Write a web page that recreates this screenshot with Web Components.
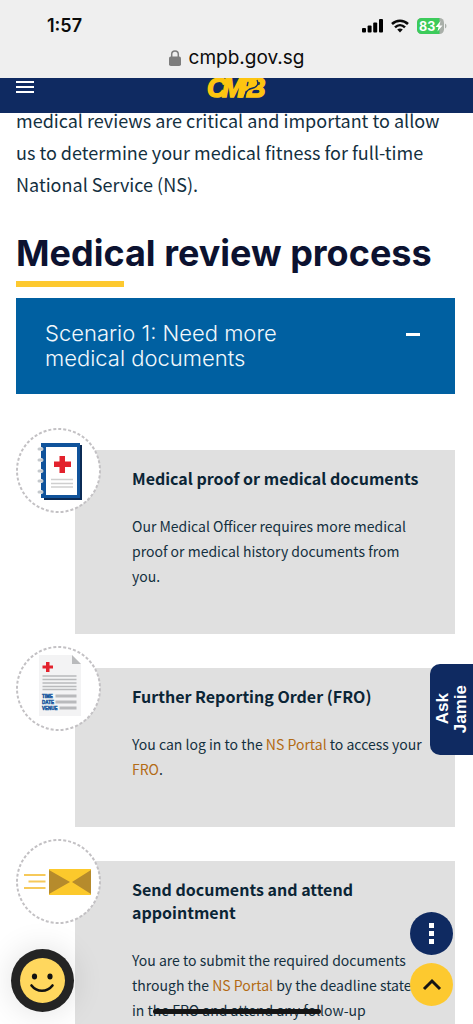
<!DOCTYPE html>
<html lang="en">
<head>
<meta charset="utf-8">
<meta name="viewport" content="width=device-width, initial-scale=1">
<title>Medical review process</title>
<style>
  :root {
    --navy: #0f2a61;
    --blue: #0060a1;
    --gold: #fdc92f;
    --ink: #14303f;
    --sans: "Noto Sans CJK SC", "Noto Sans", sans-serif;
    --display: Inter, "Open Sans", sans-serif;
  }
  html, body { margin: 0; height: 100%; }
  body { background: #fff; color: var(--ink); font-family: var(--sans); overflow: hidden; }
</style>
</head>
<body>
<cmpb-page></cmpb-page>

<script>
const define = (name, html) => {
  const template = document.createElement('template');
  template.innerHTML = html;
  customElements.define(name, class extends HTMLElement {
    constructor() {
      super();
      this.attachShadow({ mode: 'open' }).append(template.content.cloneNode(true));
    }
  });
};

define('browser-bar', `
<style>
  :host { display: block; background: #efefef; color: #0b0b0b; font-family: var(--display); padding: 16px 0 8px; }
  .status { display: flex; justify-content: space-between; align-items: center; height: 20px; padding: 0 26px 0 47px; font-size: 18px; line-height: 20px; font-weight: 600; }
  .icons { display: flex; align-items: center; gap: 8px; }
  .address { display: flex; justify-content: center; align-items: center; gap: 8px; height: 24px; margin-top: 10px; font-size: 19px; line-height: 24px; }
  svg { display: block; }
</style>
<div class="status">
  <span>1:57</span>
  <span class="icons">
    <svg width="21" height="14" viewBox="0 0 21 14" aria-hidden="true"><rect x="0" y="9" width="4" height="4.500" rx="1"/><rect x="5.600" y="6.500" width="4" height="7" rx="1"/><rect x="11.200" y="3.500" width="4" height="10" rx="1"/><rect x="17" y="0" width="4" height="13.500" rx="1"/></svg>
    <svg width="18" height="14" viewBox="0 0 18 14" fill="none" stroke="#0b0b0b" stroke-width="2.500" aria-hidden="true"><path d="M1 5C5.500 .5 12.500 .5 17 5"/><path d="M4 8.300C7 5.400 11 5.400 14 8.300"/><path d="M6.200 10.600C8 9.200 10 9.200 11.800 10.600L9 13.500Z" fill="#0b0b0b" stroke="none"/></svg>
    <svg width="30" height="16" viewBox="0 0 30 16" role="img" aria-label="Battery 83%"><rect x="0" y="0" width="27" height="16" rx="4.500" fill="#a9afa9"/><path d="M4.500 0H22.500V16H4.500A4.500 4.500 0 0 1 0 11.500V4.500A4.500 4.500 0 0 1 4.500 0Z" fill="#3ccb5b"/><path d="M28 5.500C30 6.500 30 9.500 28 10.500Z" fill="#a9afa9"/><text x="2" y="12.500" font-size="12.500" font-weight="700" fill="#fff" font-family="Inter, sans-serif">83</text><path d="M23.500 3L18.500 9H21.500L20.500 13.500L25.500 7.500H22.500Z" fill="#fff"/></svg>
  </span>
</div>
<div class="address">
  <svg width="12" height="16" viewBox="0 0 12 16" aria-hidden="true"><rect x="0" y="6.500" width="12" height="9.500" rx="1.800" fill="#7d7d7d"/><path d="M2.700 7V4.200a3.300 3.300 0 0 1 6.600 0V7" fill="none" stroke="#7d7d7d" stroke-width="1.500"/></svg>
  <span>cmpb.gov.sg</span>
</div>`);

define('site-nav', `
<style>
  :host { display: grid; grid-template-columns: 1fr auto 1fr; align-items: start; background: var(--navy); height: 35px; padding: 0 16px; position: relative; z-index: 1; }
  button { justify-self: start; margin: 3px 0 0; padding: 0; border: 0; background: none; }
  a { display: block; }
  svg { display: block; }
  text { font: italic 700 27px "Liberation Sans", sans-serif; fill: #fdc510; stroke: #fdc510; stroke-width: 1.5px; }
</style>
<button type="button" aria-label="Open menu"><svg width="18" height="12" viewBox="0 0 18 12" fill="#fff"><rect width="18" height="2"/><rect y="5" width="18" height="2"/><rect y="10" width="18" height="2"/></svg></button>
<a href="#" aria-label="CMPB home"><svg width="60" height="22" viewBox="0 0 60 22"><text x="0 15 32 39" y="19">CMPB</text><path d="M37 20C39 12 42 11 46 10C50 9 52 6 50 2" fill="none" stroke="#0f2a61" stroke-width="1.300"/></svg></a>`);

define('page-heading', `
<style>
  :host { display: block; margin-top: 33px; }
  h1 { margin: 0; color: #0c1230; font: 700 36px/40px var(--display); }
  h1::after { content: ""; display: block; width: 108px; height: 6px; margin-top: 8px; background: var(--gold); }
</style>
<h1><slot></slot></h1>`);

define('scenario-panel', `
<style>
  :host { display: block; margin-top: 11px; }
  h2 { margin: 0; }
  button { display: flex; justify-content: space-between; align-items: flex-start; gap: 64px; width: 100%; margin: 0; padding: 23px 35px 23px 29px; border: 0; background: var(--blue); color: #f2f8fc; font: 300 22px/25px var(--display); text-align: left; }
  i { flex: none; width: 14px; height: 3px; margin-top: 12px; background: #fff; }
  .steps { display: grid; gap: 12px; margin-top: 34px; }
</style>
<h2><button type="button" aria-expanded="true"><slot name="title"></slot><i></i></button></h2>
<div class="steps"><slot></slot></div>`);

define('step-card', `
<style>
  :host { display: grid; grid-template-columns: 59px 1fr; align-items: start; }
  .badge { grid-area: 1 / 1; width: 85px; height: 85px; z-index: 1; }
  .card { grid-area: 1 / 2; margin-top: 22px; padding: 17px 30px 45px 57px; background: #e0e0e0; }
  h3 { margin: 0 0 24px; color: #0b2536; font-size: 16px; line-height: 23px; font-weight: 700; }
  p { margin: 0; font-size: 14px; line-height: 25px; }
  .ring { display: grid; place-items: center; width: 85px; height: 85px; }
  .ring > * { grid-area: 1 / 1; display: block; }
</style>
<div class="badge"><div class="ring">
  <svg width="85" height="85" viewBox="0 0 85 85" aria-hidden="true"><circle cx="42.500" cy="42.500" r="41.500" fill="#fff" stroke="#c3c1c4" stroke-width="2" stroke-dasharray="3 2"/></svg>
  <slot name="icon"></slot>
</div></div>
<div class="card"><h3><slot name="title"></slot></h3><p><slot></slot></p></div>`);

define('text-link', `
<style>
  :host { display: inline; }
  a { color: #b36b14; text-decoration: none; }
</style>
<a href="#"><slot></slot></a>`);

define('icon-notebook', `
<style>:host, svg { display: block; }</style>
<svg width="85" height="85" viewBox="0 0 85 85" aria-hidden="true">
  <path d="M28 17H66V72H28Z" fill="#0b2b55"/><path d="M25 15H64V70H25Z" fill="#10539b"/><rect x="30" y="19" width="31" height="48" fill="#fff"/>
  <g fill="#fff"><circle cx="25" cy="21" r="2"/><circle cx="25" cy="32" r="2"/><circle cx="25" cy="43" r="2"/><circle cx="25" cy="53" r="2"/><circle cx="25" cy="64" r="2"/></g>
  <path d="M23 21H26M23 32H26M23 43H26M23 53H26M23 64H26" stroke="#c4c8cc" stroke-width="3" stroke-linecap="round"/>
  <path d="M43.500 28H49V33.500H55V39H49V45H43.500V39H38V33.500H43.500Z" fill="#e3222d"/>
  <path d="M35 51.500H57M35 55.500H57M35 59H57" stroke="#cfcfcf" stroke-width="1.500"/>
</svg>`);

define('icon-order', `
<style>:host, svg { display: block; }</style>
<svg width="85" height="85" viewBox="0 0 85 85" aria-hidden="true">
  <path d="M23 9H56L65 18V70H23Z" fill="#f3f3f4"/><path d="M56 9L65 18H56Z" fill="#b9babc"/>
  <path d="M30 16H33.500V19.500H37V22.500H33.500V26H30V22.500H26.500V19.500H30Z" fill="#e3222d"/>
  <path d="M26.500 30H60.500M26.500 33.500H60.500M26.500 37H60.500M26.500 40.500H60.500M26.500 43.500H60.500" stroke="#b9babc" stroke-width="1.500"/>
  <path d="M39.500 50H60.500M39.500 56H60.500M43.500 62H60.500" stroke="#b9babc" stroke-width="3"/>
  <g font-family="Liberation Sans, sans-serif" font-weight="700" font-size="4.500" fill="#10539b" stroke="#10539b" stroke-width=".4"><text x="26" y="52">TIME</text><text x="26" y="58">DATE</text><text x="26" y="64">VENUE</text></g>
</svg>`);

define('icon-envelope', `
<style>:host, svg { display: block; }</style>
<svg width="85" height="85" viewBox="0 0 85 85" aria-hidden="true">
  <rect x="33" y="30" width="42" height="26" fill="#fcc92c"/>
  <path d="M33 31L54 43L33 55ZM75 31L56 43L75 55Z" fill="#b68b2c"/>
  <path d="M8 36H29.500M12.500 42.500H29.500M8 49H29.500" stroke="#f6c95a" stroke-width="2"/>
</svg>`);

define('ask-jamie', `
<style>
  :host { position: fixed; right: 0; top: 664px; z-index: 3; }
  button { display: grid; place-items: center; width: 43px; height: 91px; margin: 0; padding: 0; border: 0; border-radius: 10px 0 0 10px; background: var(--navy); color: #fff; }
  span { writing-mode: vertical-rl; transform: rotate(180deg); text-align: center; font: 700 17px/18px "Liberation Sans", sans-serif; }
</style>
<button type="button"><span>Ask<br>Jamie</span></button>`);

define('floating-actions', `
<style>
  :host { position: fixed; right: 20px; bottom: 18px; z-index: 3; display: grid; gap: 8px; }
  button { display: grid; place-items: center; width: 43px; height: 43px; margin: 0; padding: 0; border: 0; border-radius: 50%; background: var(--navy); }
  .up { background: var(--gold); }
  svg { display: block; }
</style>
<button type="button" aria-label="More options"><svg width="5" height="21" viewBox="0 0 5 21" fill="#fff"><rect width="5" height="5"/><rect y="8" width="5" height="5"/><rect y="16" width="5" height="5"/></svg></button>
<button type="button" class="up" aria-label="Back to top"><svg width="20" height="14" viewBox="0 0 20 14" fill="none" stroke="#151515" stroke-width="3"><path d="M2 11L10 3L18 11"/></svg></button>`);

define('feedback-face', `
<style>
  :host { position: fixed; left: 11px; bottom: 12px; z-index: 3; }
  button { display: block; width: 63px; height: 63px; margin: 0; padding: 0; border: 0; border-radius: 50%; background: #242424; box-shadow: 0 0 32px rgba(0, 0, 0, .12); }
  svg { display: block; }
</style>
<button type="button" aria-label="Give feedback"><svg width="63" height="63" viewBox="0 0 63 63"><circle cx="31.500" cy="31.500" r="22.500" fill="#ffd75e"/><ellipse cx="23.500" cy="27.500" rx="2.600" ry="3" fill="#111"/><ellipse cx="39" cy="27.500" rx="2.600" ry="3" fill="#111"/><path d="M20.500 36.500C26 43.500 36 43.500 41.500 36.500" fill="none" stroke="#111" stroke-width="2.600" stroke-linecap="round"/></svg></button>`);

define('home-indicator', `
<style>
  :host { position: fixed; left: 0; right: 0; bottom: 10px; z-index: 2; display: flex; justify-content: center; pointer-events: none; }
  i { width: 168px; height: 5px; border-radius: 3px; background: #151515; }
</style>
<i></i>`);

define('cmpb-page', `
<style>
  :host { display: grid; grid-template-rows: auto auto 1fr; height: 100%; }
  main { min-height: 0; overflow: hidden; padding: 0 18px 0 16px; }
  .lead { margin: -9px 0 0; font-size: 18px; line-height: 32px; }
</style>
<browser-bar></browser-bar>
<site-nav></site-nav>
<main>
  <p class="lead">medical reviews are critical and important to allow us to determine your medical fitness for full-time National Service (NS).</p>
  <page-heading>Medical review process</page-heading>
  <scenario-panel>
    <span slot="title">Scenario 1: Need more medical documents</span>
    <step-card>
      <icon-notebook slot="icon"></icon-notebook>
      <span slot="title">Medical proof or medical documents</span>
      Our Medical Officer requires more medical proof or medical history documents from you.
    </step-card>
    <step-card>
      <icon-order slot="icon"></icon-order>
      <span slot="title">Further Reporting Order (FRO)</span>
      You can log in to the <text-link>NS Portal</text-link> to access your <text-link>FRO</text-link>.
    </step-card>
    <step-card>
      <icon-envelope slot="icon"></icon-envelope>
      <span slot="title">Send documents and attend appointment</span>
      You are to submit the required documents through the <text-link>NS Portal</text-link> by the deadline stated in the FRO and attend any follow-up
    </step-card>
  </scenario-panel>
</main>
<ask-jamie></ask-jamie>
<home-indicator></home-indicator>
<floating-actions></floating-actions>
<feedback-face></feedback-face>`);
</script>
</body>
</html>
